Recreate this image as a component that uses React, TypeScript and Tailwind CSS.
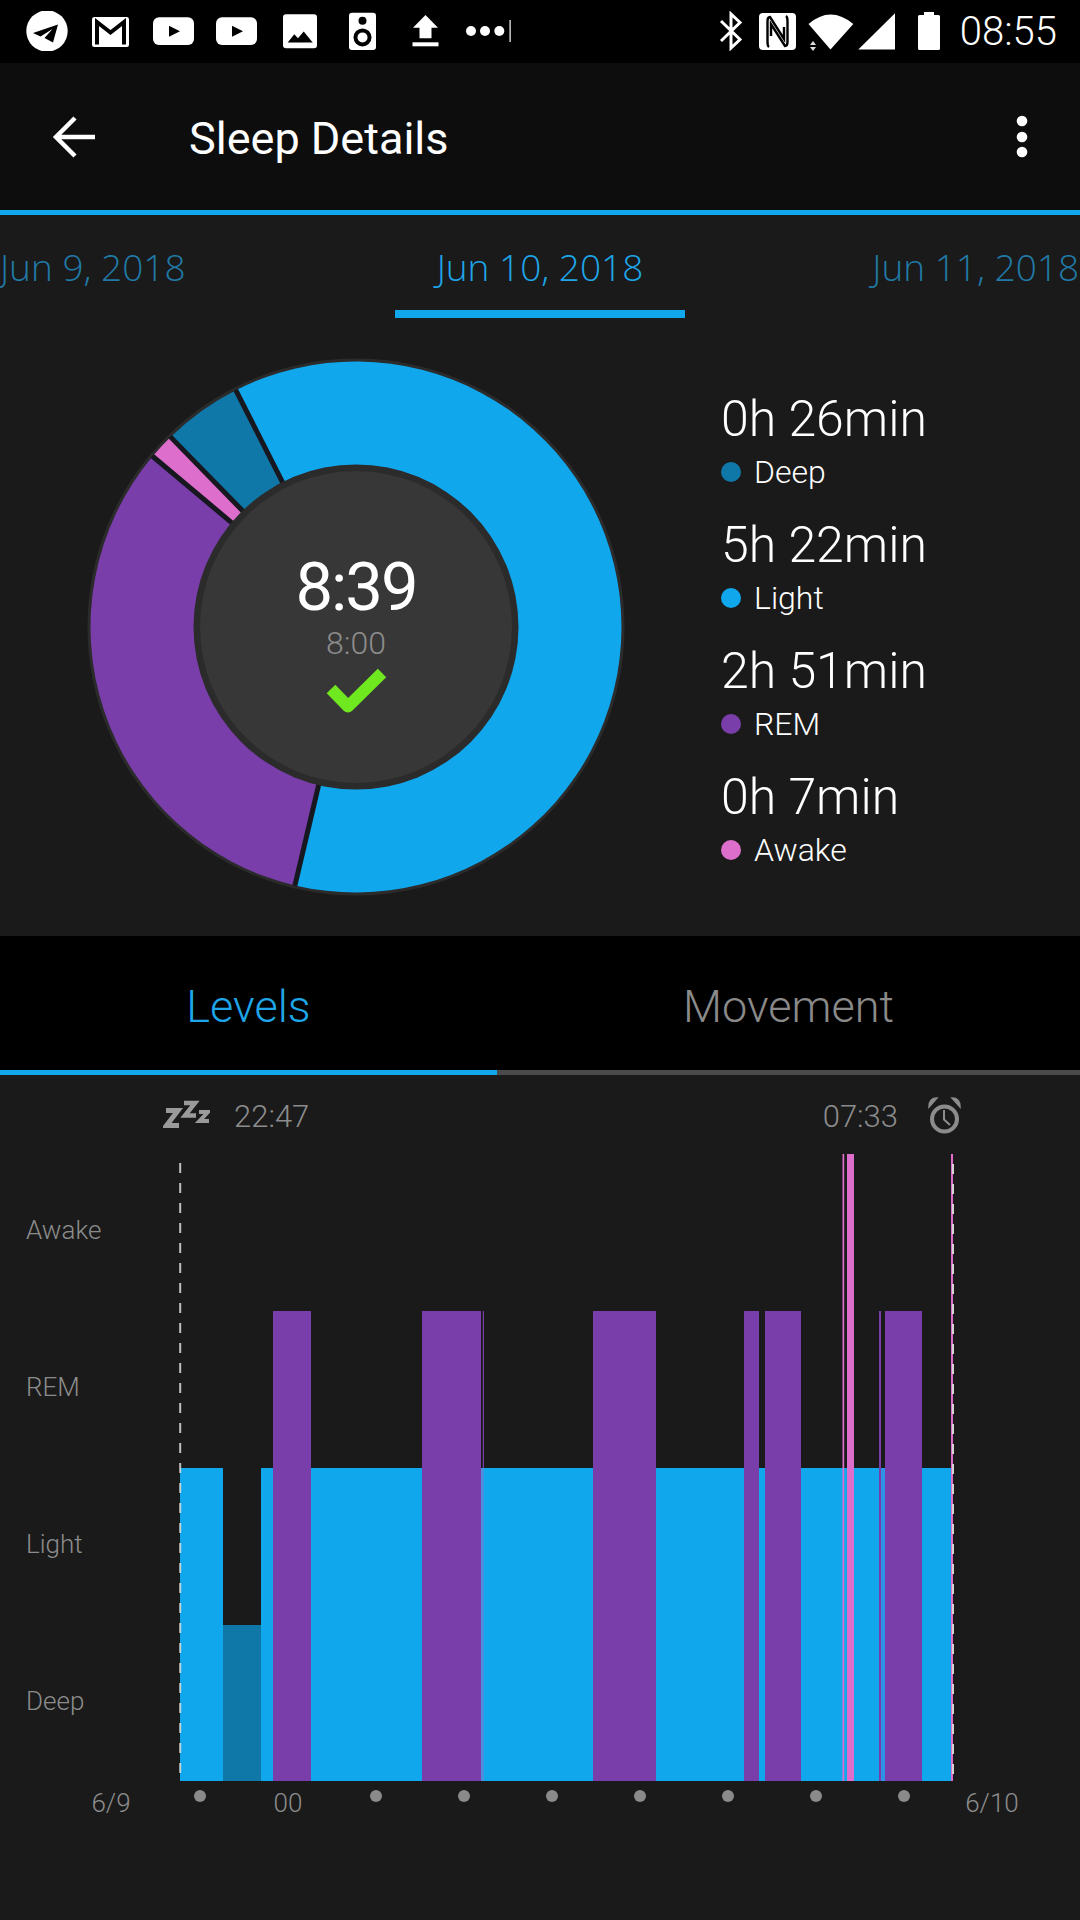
import React from "react";

const BLUE = "#11a7ed";
const PURPLE = "#7a3eaa";
const PINK = "#de6ecb";
const DEEP = "#0f78a9";

function polar(r: number, deg: number) {
  const a = (deg * Math.PI) / 180;
  return [275 + r * Math.sin(a), 275 - r * Math.cos(a)];
}

function arc(r1: number, r2: number, from: number, to: number) {
  const [x1, y1] = polar(r2, from);
  const [x2, y2] = polar(r2, to);
  const [x3, y3] = polar(r1, to);
  const [x4, y4] = polar(r1, from);
  const large = to - from > 180 ? 1 : 0;
  return `M${x1} ${y1} A${r2} ${r2} 0 ${large} 1 ${x2} ${y2} L${x3} ${y3} A${r1} ${r1} 0 ${large} 0 ${x4} ${y4} Z`;
}

function Donut() {
  const cuts = [-26.9, 193.3, 310, 315.7];
  return (
    <svg width="550" height="550" viewBox="0 0 550 550">
      <circle cx="275" cy="275" r="268.5" fill="#2b2b2b" />
      <path d={arc(150, 265.5, -26.9, 193.3)} fill={BLUE} />
      <path d={arc(150, 265.5, 193.3, 310)} fill={PURPLE} />
      <path d={arc(150, 265.5, 310, 315.7)} fill={PINK} />
      <path d={arc(150, 265.5, 315.7, 333.1)} fill={DEEP} />
      {cuts.map((c) => {
        const [x1, y1] = polar(155, c);
        const [x2, y2] = polar(266, c);
        return <line key={c} x1={x1} y1={y1} x2={x2} y2={y2} stroke="#17181f" strokeWidth="5" />;
      })}
      <circle cx="275" cy="275" r="162.5" fill="#2b2b2b" />
      <circle cx="275" cy="275" r="156" fill="#373737" />
      <path d="M250 337 L267 354.5 L301 321" fill="none" stroke="#70e81f" strokeWidth="12" strokeLinejoin="round" />
    </svg>
  );
}

function LeftStatus() {
  return (
    <div className="flex items-start">
      <svg className="w-[42px] h-[40px]" viewBox="0 0 42 40">
        <circle cx="21" cy="20" r="20.7" fill="#fff" />
        <path d="M32 13.5 L7 22 L14.5 25.5 L26.5 18 L18.5 27 L27 31.5 Z" fill="#000" />
      </svg>
      <svg className="w-[37px] h-[40px] ml-[24px]" viewBox="0 0 37 40">
        <rect x="0" y="6" width="37" height="30" rx="2.5" fill="#fff" />
        <path d="M5 33.5 V11 L18.5 21.5 L32 11 V33.5" fill="none" stroke="#000" strokeWidth="4" />
      </svg>
      {[24, 22].map((m, i) => (
        <svg key={i} className={i === 0 ? "w-[41px] h-[40px] ml-[24px]" : "w-[41px] h-[40px] ml-[22px]"} viewBox="0 0 41 40">
          <rect x="0" y="6.3" width="41" height="27.7" rx="6" fill="#fff" />
          <path d="M16 14.7 L27 20.2 L16 25.7 Z" fill="#000" />
        </svg>
      ))}
      <svg className="w-[34px] h-[40px] ml-[26px]" viewBox="0 0 34 40">
        <rect x="0" y="3.3" width="34" height="34" rx="3" fill="#fff" />
        <path d="M4.7 31.6 L11.3 23.3 L15 27.3 L20.7 20.6 L29.7 31.6 Z" fill="#000" />
      </svg>
      <svg className="w-[27px] h-[40px] ml-[32px]" viewBox="0 0 27 40">
        <rect x="0" y="1.7" width="27" height="37.3" rx="3" fill="#fff" />
        <circle cx="13.5" cy="9.7" r="4" fill="#000" />
        <circle cx="13.5" cy="26.4" r="9" fill="#000" />
        <circle cx="13.5" cy="26.4" r="5" fill="#fff" />
      </svg>
      <svg className="w-[27px] h-[40px] ml-[36px]" viewBox="0 0 27 40">
        <path d="M13.5 4 L26 16.7 H19.5 V27.3 H7.5 V16.7 H1 Z" fill="#fff" />
        <rect x="0.5" y="31.3" width="26" height="4" fill="#fff" />
      </svg>
      <svg className="w-[46px] h-[40px] ml-[27px]" viewBox="0 0 46 40">
        <circle cx="5" cy="20" r="5" fill="#fff" />
        <circle cx="19" cy="20" r="5" fill="#fff" />
        <circle cx="33.3" cy="20" r="5" fill="#fff" />
        <rect x="43.5" y="9" width="1.2" height="22" fill="#fff" />
      </svg>
    </div>
  );
}

function RightStatus() {
  return (
    <div className="flex items-start">
      <svg className="w-[24px] h-[40px]" viewBox="0 0 24 40">
        <path d="M2 10 L21 28.5 L12 37 V3 L21 11.5 L2 30" fill="none" stroke="#fff" strokeWidth="3" />
      </svg>
      <svg className="w-[37px] h-[40px] ml-[16px]" viewBox="0 0 37 40">
        <rect x="0" y="2" width="37" height="37" rx="4" fill="#fff" />
        <path d="M10 36 Q8.5 35 8.5 31 V10 Q8.5 6 11 6 L25 28 V16" fill="none" stroke="#000" strokeWidth="2.4" />
        <path d="M27 5 Q28.5 6 28.5 10 V31 Q28.5 35 26 35 L12 13 V25" fill="none" stroke="#000" strokeWidth="2.4" />
      </svg>
      <svg className="w-[46px] h-[40px] ml-[12px]" viewBox="0 0 46 40">
        <path d="M22.5 38.5 L0.5 13 Q22.5 -6 45.3 13 Z" fill="#fff" />
        <path d="M2 34 L5 30 L8 34 Z M2 36 L8 36 L5 40 Z" fill="#ddd" />
      </svg>
      <svg className="w-[37px] h-[40px] ml-[4px]" viewBox="0 0 37 40">
        <path d="M0.3 38.5 L37 2.3 V38.5 Z" fill="#fff" />
      </svg>
      <svg className="w-[22px] h-[40px] ml-[23px]" viewBox="0 0 22 40">
        <path d="M6 1 H16 V4 H20.5 Q22 4 22 5.5 V37.5 Q22 39 20.5 39 H1.5 Q0 39 0 37.5 V5.5 Q0 4 1.5 4 H6 Z" fill="#fff" />
      </svg>
      <span className="ml-[20px] text-[40px] leading-[42px] font-light text-white font-[Roboto,sans-serif]">08:55</span>
    </div>
  );
}

function StatusBar() {
  return (
    <div className="h-[63px] bg-black flex justify-between pt-[11px] pl-[26px] pr-[23px]">
      <LeftStatus />
      <RightStatus />
    </div>
  );
}

function Toolbar() {
  return (
    <div className="h-[147px] bg-[#0d0d0d] flex items-center">
      <svg className="w-[44px] h-[44px] ml-[52px]" viewBox="0 0 44 44">
        <path d="M43 22 H4 M23 3 L4 22 L23 41" fill="none" stroke="#fff" strokeWidth="4.5" />
      </svg>
      <span className="ml-[93px] mt-[4px] text-[45px] leading-[50px] text-white font-[Roboto,sans-serif]">Sleep Details</span>
      <svg className="ml-auto mr-[47px] w-[22px] h-[44px]" viewBox="0 0 22 44">
        <circle cx="11" cy="6" r="5.3" fill="#fff" />
        <circle cx="11" cy="22" r="5.3" fill="#fff" />
        <circle cx="11" cy="37" r="5.3" fill="#fff" />
      </svg>
    </div>
  );
}

function DateTabs() {
  return (
    <div className="h-[103px] grid grid-cols-[1fr_290px_1fr] text-[37px] leading-[46px] font-['Open_Sans',sans-serif] font-light">
      <div className="pt-[29px] text-[#2179a6] whitespace-nowrap">Jun 9, 2018</div>
      <div className="h-[103px] pt-[29px] border-b-[8px] border-[#11a7ed] text-center text-[#1ea6e8] whitespace-nowrap">Jun 10, 2018</div>
      <div className="pt-[29px] pr-[1px] text-right text-[#2179a6] whitespace-nowrap">Jun 11, 2018</div>
    </div>
  );
}

const legend = [
  { value: "0h 26min", label: "Deep", dot: "bg-[#0f78a9]" },
  { value: "5h 22min", label: "Light", dot: "bg-[#11a7ed]" },
  { value: "2h 51min", label: "REM", dot: "bg-[#7a3eaa]" },
  { value: "0h 7min", label: "Awake", dot: "bg-[#de6ecb]" },
];

function Summary() {
  return (
    <div className="h-[618px] flex items-start">
      <div className="relative ml-[81px] mt-[34px] w-[550px] h-[550px] shrink-0">
        <Donut />
        <div className="absolute inset-x-0 top-[199px] flex flex-col items-center font-[Roboto,sans-serif]">
          <span className="text-[67px] leading-[72px] tracking-[-2px] text-white">8:39</span>
          <span className="text-[32px] leading-[40px] font-light text-[#8c8c8c]">8:00</span>
        </div>
      </div>
      <div className="ml-[90px] mt-[68px] flex flex-col gap-[20px]">
        {legend.map((l) => (
          <div key={l.label} className="flex flex-col">
            <span className="text-[50px] leading-[66px] font-light text-white font-[Roboto,sans-serif] whitespace-nowrap">{l.value}</span>
            <div className="flex items-center h-[40px] gap-[13px]">
              <span className={`w-[20px] h-[20px] rounded-full ${l.dot}`} />
              <span className="text-[32px] leading-[40px] text-white font-[Roboto,sans-serif] font-light">{l.label}</span>
            </div>
          </div>
        ))}
      </div>
    </div>
  );
}

function LevelTabs() {
  return (
    <div className="bg-black">
      <div className="h-[134px] pt-[7px] grid grid-cols-[497px_1fr] text-[45px] font-light font-[Roboto,sans-serif] items-center text-center">
        <span className="text-[#1ea6e8]">Levels</span>
        <span className="text-[#8a8a8a]">Movement</span>
      </div>
      <div className="h-[5px] grid grid-cols-[497px_1fr]">
        <div className="bg-[#11a7ed]" />
        <div className="bg-[#4a4a4a]" />
      </div>
    </div>
  );
}

function TimesRow() {
  return (
    <div className="h-[79px] flex pl-[163px] pr-[119px] pt-[22px] items-start justify-between text-[31px] leading-[40px] font-light text-[#8c8c8c] font-[Roboto,sans-serif]">
      <div className="flex items-start">
        <svg className="w-[47px] h-[36px]" viewBox="163 1097 47 36">
          <path d="M166 1110.5 H178 L166.5 1125.5 H179" fill="none" stroke="#9a9a9a" strokeWidth="5" />
          <path d="M184 1103 H195 L185 1115.5 H196" fill="none" stroke="#9a9a9a" strokeWidth="4.5" />
          <path d="M199 1112 H208 L199.5 1121 H209" fill="none" stroke="#9a9a9a" strokeWidth="4" />
        </svg>
        <span className="ml-[24px]">22:47</span>
      </div>
      <div className="flex items-start">
        <span>07:33</span>
        <svg className="ml-[30px] w-[33px] h-[37px]" viewBox="928 1097 33 37">
          <circle cx="944.5" cy="1119" r="12.5" fill="none" stroke="#8c8c8c" strokeWidth="4" />
          <path d="M944 1110 V1119.5 L950 1125" fill="none" stroke="#8c8c8c" strokeWidth="2" />
          <path d="M929 1107 Q929 1098 937 1098 Z M960 1107 Q960 1098 952 1098 Z" fill="#8c8c8c" stroke="#8c8c8c" strokeWidth="1.5" />
        </svg>
      </div>
    </div>
  );
}

const purple: [number, number][] = [
  [273, 311],
  [422, 481],
  [593, 656],
  [744, 759],
  [765, 801],
  [885, 922],
];

function Chart() {
  return (
    <svg className="w-[790px] h-[627px] shrink-0" viewBox="170 1154 790 627">
      <rect x="180" y="1468" width="43" height="313" fill={BLUE} />
      <rect x="261" y="1468" width="690" height="313" fill={BLUE} />
      <rect x="223" y="1625" width="38" height="156" fill={DEEP} />
      {purple.map(([a, b]) => (
        <rect key={a} x={a} y="1311" width={b - a} height="470" fill={PURPLE} />
      ))}
      <rect x="481" y="1468" width="3" height="313" fill="#4b8fdf" />
      <rect x="482.8" y="1311" width="1.2" height="157" fill={PURPLE} />
      <rect x="879" y="1311" width="2" height="470" fill={PURPLE} />
      <rect x="881" y="1468" width="4" height="313" fill="#2e93e6" />
      <rect x="842.5" y="1154" width="1.7" height="627" fill={PINK} />
      <rect x="847" y="1154" width="7" height="627" fill={PINK} />
      <line x1="180.2" y1="1163" x2="180.2" y2="1781" stroke="#dcdcdc" strokeOpacity="0.85" strokeWidth="2" strokeDasharray="10 10" />
      <rect x="951" y="1154" width="2" height="627" fill={PINK} />
      <line x1="953" y1="1164" x2="953" y2="1781" stroke="#d4d4d4" strokeWidth="2" strokeDasharray="10 10" />
    </svg>
  );
}

function ChartBlock() {
  return (
    <div className="flex">
      <div className="w-[170px] -mt-[2px] pl-[26px] flex flex-col text-[26px] font-light text-[#8c8c8c] font-[Roboto,sans-serif]">
        {["Awake", "REM", "Light", "Deep"].map((l) => (
          <div key={l} className="h-[157px] flex items-center">{l}</div>
        ))}
      </div>
      <Chart />
    </div>
  );
}

function Axis() {
  return (
    <div className="flex pl-[66px] pt-[9px] text-[26px] leading-[30px] font-light text-[#8c8c8c] font-[Roboto,sans-serif]">
      <div className="w-[90px] -mt-[2px] text-center">6/9</div>
      {[0, 1, 2, 3, 4, 5, 6, 7, 8].map((i) => (
        <div key={i} className="w-[88px] flex justify-center">
          {i === 1 ? (
            <span className="-mt-[2px]">00</span>
          ) : (
            <span className="w-[12px] h-[12px] rounded-full bg-[#8a8a8a]" />
          )}
        </div>
      ))}
      <div className="w-[88px] -mt-[2px] text-center">6/10</div>
    </div>
  );
}

export default function App() {
  return (
    <div className="w-[1080px] h-[1920px] bg-[#1a1a1a] overflow-hidden">
      <StatusBar />
      <Toolbar />
      <div className="h-[5px] bg-[#11a7ed]" />
      <DateTabs />
      <Summary />
      <LevelTabs />
      <TimesRow />
      <ChartBlock />
      <Axis />
    </div>
  );
}
